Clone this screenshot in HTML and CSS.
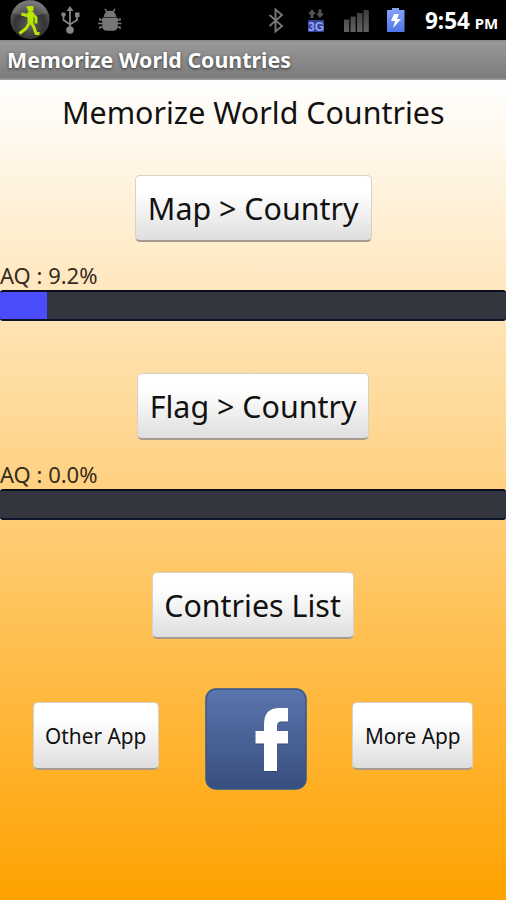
FILE: index.html
```html
<!DOCTYPE html>
<html lang="en">
<head>
<meta charset="utf-8">
<title>Memorize World Countries</title>
<link rel="stylesheet" href="styles.css">
</head>
<body>
<div class="status">
  <svg class="icons" width="420" height="40" viewBox="0 0 420 40" aria-hidden="true">
    <defs>
      <radialGradient id="ball" cx=".5" cy=".65" r=".6"><stop offset="0" stop-color="#606060"/><stop offset=".65" stop-color="#333"/><stop offset="1" stop-color="#666"/></radialGradient>
      <linearGradient id="batt" x2="0" y2="1"><stop offset="0" stop-color="#86a5f8"/><stop offset="1" stop-color="#5077e8"/></linearGradient>
      <linearGradient id="sig" x2="0" y2="1"><stop offset="0" stop-color="#3c3c3c"/><stop offset="1" stop-color="#626262"/></linearGradient>
    </defs>
    <circle cx="30" cy="19.500" r="19.500" fill="url(#ball)"/>
    <path d="M13 13Q17 1 30 1T47 13Q30 19 13 13Z" fill="#aaa" opacity=".3"/>
    <g fill="none" stroke="#b9e800" stroke-linejoin="round">
      <path d="M26.500 7.300h7" stroke-width="2"/>
      <path d="M21.500 14l7 2M32 14l4 3.500v6M30 22l-4 6.500-6.500 5M31 22l3 5.500 2 6h3.500" stroke-width="2.900"/>
      <path d="M30.500 12v10.500" stroke-width="6"/>
    </g>
    <circle cx="30.500" cy="9" r="3" fill="#b9e800"/>
    <g fill="none" stroke="#858585" stroke-width="1.800">
      <path d="M70 29V10M63.500 15v5l6.500 4.500 7-4.500v-4"/>
    </g>
    <g fill="#858585"><path d="M70 6l3.500 5h-7z"/><circle cx="70" cy="30" r="3.800"/><circle cx="63.500" cy="14.500" r="2.300"/><path d="M75 12.500h4.500V17H75z"/></g>
    <g fill="#777" stroke="#777" stroke-width="1.500">
      <path d="M103 18.500h14v7q0 4.500-4 4.500h-6q-4 0-4-4.500z"/>
      <path d="M104.500 16.500q1-5 5.500-5t5.500 5z"/>
      <path d="M107.500 13l-2.500-4M112.500 13l2.500-4M103 20h-3v-2M103 23.500h-5M103 27h-3v2M117 20h3v-2M117 23.500h4.500M117 27h3v2" fill="none"/>
    </g>
    <path d="M269.500 15l12.500 11-6.500 5.500V9.500L282 15l-12.500 11" fill="none" stroke="#777" stroke-width="1.900"/>
    <g fill="#555"><path d="M312 9.500l4 4.500h-2.500v4h-3v-4H308zM320 18l-4-4.500h2.500v-4h3v4h2.500z"/></g>
    <rect x="308" y="20" width="16" height="12" fill="#35438f"/>
    <text class="network" x="308" y="30.800" textLength="16" lengthAdjust="spacingAndGlyphs">3G</text>
    <path d="M344 19.500h5.200V32H344zM350.500 16.500h5.200V32h-5.200zM357 13h5.500v19H357zM363.500 10h5.300v22h-5.300z" fill="url(#sig)"/>
    <path d="M387 10h5V8h7v2h5.500v22H387z" fill="url(#batt)"/>
    <path d="M394 14h5l-2 5h4l-8 9 2-7h-4z" fill="#fff"/>
  </svg>
  <div class="clock">9:54 <span class="meridiem">PM</span></div>
</div>
<div class="titlebar"><span class="apptitle">Memorize World Countries</span></div>
<main>
  <h1><span class="heading">Memorize World Countries</span></h1>
  <button class="btn map"><span>Map &gt; Country</span></button>
  <div class="label first">AQ : 9.2%</div>
  <div class="bar"><div class="fill" style="width:9.2%"></div></div>
  <button class="btn flag"><span>Flag &gt; Country</span></button>
  <div class="label">AQ : 0.0%</div>
  <div class="bar"></div>
  <button class="btn list"><span>Contries List</span></button>
  <div class="bottom">
    <button class="btn small other"><span>Other App</span></button>
    <svg class="fb" width="102" height="102" viewBox="0 0 102 102" role="img" aria-label="Facebook">
      <defs><linearGradient id="blue" x2="0" y2="1"><stop offset="0" stop-color="#5b75ae"/><stop offset="1" stop-color="#384f7d"/></linearGradient></defs>
      <rect x="1" y="1" width="100" height="100" rx="10" fill="url(#blue)" stroke="#33568a" stroke-width="1.500"/>
      <path d="M83 20v13.500h-6.500q-4.500 0-4.500 5V43h11v12.500H72V83H59V55.500h-8.500V43H59v-7q0-16 15.500-16z" fill="#253c69" opacity=".6" transform="translate(0 1)"/>
      <path d="M83 20v13.500h-6.500q-4.500 0-4.500 5V43h11v12.500H72V83H59V55.500h-8.500V43H59v-7q0-16 15.500-16z" fill="#fff"/>
    </svg>
    <button class="btn small more"><span>More App</span></button>
  </div>
</main>
</body>
</html>
```
FILE: styles.css
```css
* { box-sizing: border-box; }
body {
  margin: 0;
  width: 506px;
  height: 900px;
  overflow: hidden;
  display: flex;
  flex-direction: column;
  font-family: "Noto Sans", "Open Sans", sans-serif;
  color: #111;
  white-space: nowrap;
}
.status { height: 40px; background: #000; display: flex; flex: none; }
.icons { flex: none; }
.network { font: bold 13px "Liberation Sans", sans-serif; fill: #91a5ff; }
.clock {
  padding-left: 5px;
  font-weight: 700;
  font-size: 22.500px;
  line-height: 42px;
  color: #fff;
}
.meridiem { font-size: 15px; margin-left: -1px; }
.titlebar {
  flex: none;
  height: 40px;
  padding-left: 7px;
  background: linear-gradient(#858585, #989898 6%, #7c7c7c 94%, #a4a4a4);
  color: #fff;
  font-weight: 700;
  font-size: 22px;
  line-height: 39px;
  text-shadow: 0 1px 3px #333;
}
.apptitle { display: inline-block; transform: scaleX(.971); transform-origin: left; }
main {
  flex: 1;
  display: flex;
  flex-direction: column;
  align-items: center;
  background: linear-gradient(#fff, #ffa200);
}
h1 { margin: 9px 0 0; height: 44px; font-weight: 400; font-size: 31.500px; line-height: 45px; }
.heading { display: inline-block; transform: scaleX(.965); }
.btn {
  flex: none;
  display: flex;
  justify-content: center;
  align-items: center;
  height: 67px;
  padding: 0 0 1px;
  border: 1px solid #d5d1ca;
  border-bottom: 2px solid #a59a90;
  border-radius: 5px;
  background: linear-gradient(#fff 25%, #f2f2f2 55%, #dedede);
  color: #111;
  font: 31.500px "Noto Sans", "Open Sans", sans-serif;
}
.btn span { transform: scaleX(.965); }
.map { width: 237px; margin-top: 42px; }
.flag { width: 232px; margin-top: 52px; }
.list { width: 202px; margin-top: 52px; }
.label { align-self: stretch; margin-top: 20px; height: 29px; font-size: 22px; line-height: 28px; color: #362c1b; }
.first { margin-top: 19px; }
.bar {
  align-self: stretch;
  height: 31px;
  border-top: 2px solid #080d20;
  border-bottom: 2px solid #0c1529;
  border-radius: 3px;
  background: #33353f;
  overflow: hidden;
}
.fill { height: 31px; margin-top: -2px; background: #4b4cfb; }
.bottom {
  align-self: stretch;
  margin-top: 49px;
  padding: 0 33px;
  display: flex;
  align-items: flex-start;
}
.fb { margin-left: 46px; flex: none; }
.small { font-size: 22.500px; margin-top: 14px; height: 68px; }
.btn.small span { transform: scaleX(.925); }
.other { width: 126px; }
.more { width: 121px; margin-left: 45px; }
```
